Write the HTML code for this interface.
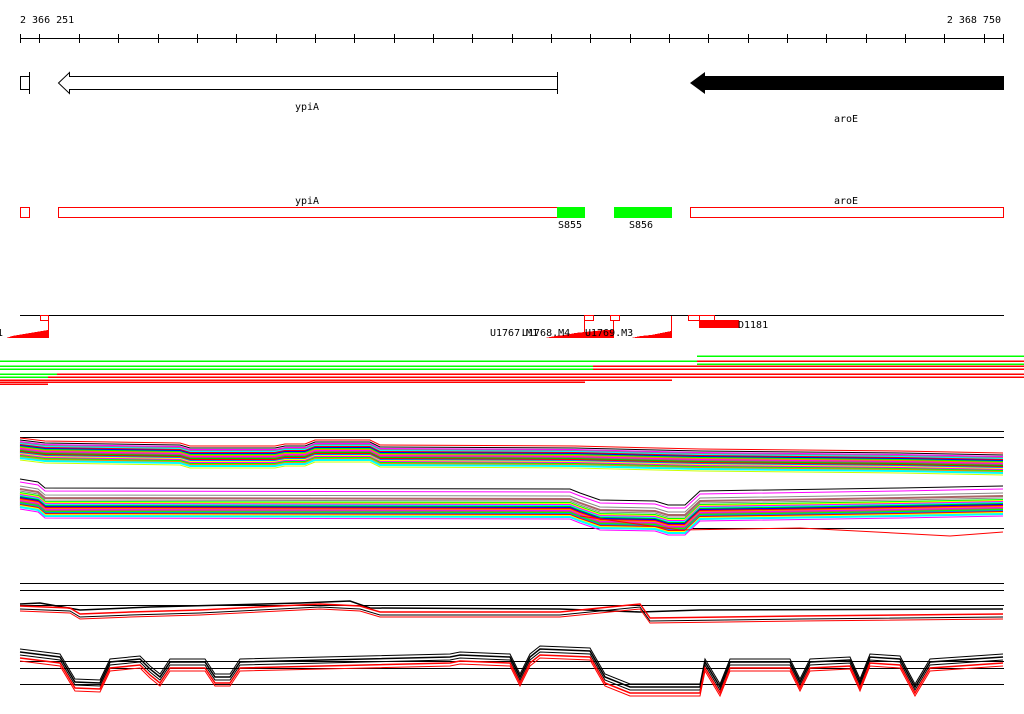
<!DOCTYPE html>
<html><head><meta charset="utf-8"><style>
body{margin:0;background:#fff;width:1024px;height:714px;overflow:hidden}
svg{display:block}
text{font-family:"DejaVu Sans Mono","Liberation Mono",monospace;font-size:10px;fill:#000}
</style></head><body>
<svg width="1024" height="714" viewBox="0 0 1024 714" xmlns="http://www.w3.org/2000/svg" shape-rendering="crispEdges">
<text x="20" y="23">2 366 251</text>
<text x="1001" y="23" text-anchor="end">2 368 750</text>
<g stroke="#000" stroke-width="1">
<line x1="20" y1="38.5" x2="1004" y2="38.5"/>
<path d="M20.5 34v9M39.5 34v9M79.5 34v9M118.5 34v9M158.5 34v9M197.5 34v9M236.5 34v9M276.5 34v9M315.5 34v9M354.5 34v9M394.5 34v9M433.5 34v9M472.5 34v9M512.5 34v9M551.5 34v9M590.5 34v9M630.5 34v9M669.5 34v9M708.5 34v9M748.5 34v9M787.5 34v9M826.5 34v9M866.5 34v9M905.5 34v9M944.5 34v9M984.5 34v9M1003.5 34v9"/>
</g>
<path d="M20.5 76.5H29.5V89.5H20.5Z M29.5 72V94" fill="none" stroke="#000"/>
<path d="M58.5 83 L69.5 72.5 V76.5 H557.5 V89.5 H69.5 V93.5 Z M557.5 72v22" fill="#fff" stroke="#000" shape-rendering="auto"/>
<path d="M690 83 L705 72 V76 H1004 V90 H705 V94 Z" fill="#000" shape-rendering="auto"/>
<text x="307" y="110" text-anchor="middle">ypiA</text>
<text x="846" y="122" text-anchor="middle">aroE</text>
<g fill="none" stroke="#f00">
<rect x="20.5" y="207.5" width="9" height="10"/>
<rect x="58.5" y="207.5" width="499" height="10"/>
<rect x="690.5" y="207.5" width="313" height="10"/>
</g>
<rect x="557" y="207" width="28" height="11" fill="#0f0"/>
<rect x="614" y="207" width="58" height="11" fill="#0f0"/>
<text x="307" y="204" text-anchor="middle">ypiA</text>
<text x="846" y="204" text-anchor="middle">aroE</text>
<text x="558" y="228">S855</text>
<text x="629" y="228">S856</text>
<line x1="20" y1="315.5" x2="1004" y2="315.5" stroke="#000"/>
<g fill="none" stroke="#f00">
<rect x="40.5" y="315.5" width="8" height="5"/>
<rect x="584.5" y="315.5" width="9" height="5"/>
<rect x="610.5" y="315.5" width="9" height="5"/>
<rect x="688.5" y="315.5" width="11" height="5"/>
<rect x="699.5" y="315.5" width="15" height="5"/>
<path d="M48.5 316V338M584.5 320V338M613.5 320V338M671.5 316V338"/>
</g>
<g fill="#f00">
<path d="M6 338 L12 336 L18 335 L24 334 L30 333 L36 332 L42 331 L48 330 V338Z"/>
<path d="M545 338 L555 336 L565 335 L575 333 L585 332 L595 331 L605 330 L613 330 V338Z"/>
<path d="M631 338 L641 336 L651 335 L661 333 L671 331 V338Z"/>
<rect x="699" y="320" width="40" height="8"/>
</g>
<text x="-3" y="336">1</text>
<text x="490" y="336">U1767.M1</text>
<text x="522" y="336">U1768.M4</text>
<text x="585" y="336">U1769.M3</text>
<text x="738" y="328">D1181</text>
<g stroke-width="1.5">
<line x1="697" y1="356" x2="1024" y2="356" stroke="#0f0"/>
<line x1="0" y1="361" x2="697" y2="361" stroke="#0f0"/>
<line x1="697" y1="361" x2="1024" y2="361" stroke="#f00"/>
<line x1="697" y1="364" x2="1024" y2="364" stroke="#0f0"/>
<line x1="0" y1="366" x2="593" y2="366" stroke="#0f0"/>
<line x1="593" y1="366" x2="1024" y2="366" stroke="#f00"/>
<line x1="0" y1="369" x2="593" y2="369" stroke="#0f0"/>
<line x1="593" y1="369" x2="1024" y2="369" stroke="#f00"/>
<line x1="0" y1="374" x2="57" y2="374" stroke="#0f0"/>
<line x1="57" y1="374" x2="1024" y2="374" stroke="#f00"/>
<line x1="0" y1="377" x2="48" y2="377" stroke="#0f0"/>
<line x1="48" y1="377" x2="1024" y2="377" stroke="#f00"/>
<line x1="0" y1="380" x2="672" y2="380" stroke="#f00"/>
<line x1="0" y1="382" x2="585" y2="382" stroke="#f00"/>
<line x1="0" y1="384" x2="48" y2="384" stroke="#f00"/>
</g>
<defs>
<path id="b1" fill="none" d="M20 440 L45 443 L180 445 L190 448 L275 448 L285 446 L305 446 L315 442 L370 442 L380 447 L575 448 L700 451 L900 453 L1003 455"/>
<path id="b2" fill="none" d="M20 483 L38 486 L45 492 L570 493 L580 497 L600 504 L655 505 L668 509 L685 509 L700 495 L900 492 L1003 490"/>
<path id="c1" fill="none" d="M20 606 L70 608 L80 614 L130 612 L200 610 L320 604 L360 606 L380 612 L560 612 L640 604 L650 618 L800 616 L1003 614"/>
<path id="c2" fill="none" d="M20 655 L60 660 L75 685 L100 686 L110 665 L140 662 L150 672 L160 680 L170 665 L205 665 L215 680 L230 680 L240 665 L450 660 L460 658 L510 660 L520 680 L530 660 L540 652 L590 654 L605 680 L630 690 L700 690 L705 665 L720 690 L730 665 L790 665 L800 685 L810 665 L850 663 L860 685 L870 660 L900 662 L915 690 L930 665 L1003 660"/>
</defs>
<g stroke="#000" stroke-width="1">
<line x1="20" y1="431.5" x2="1004" y2="431.5"/>
<line x1="20" y1="437.5" x2="1004" y2="437.5"/>
<line x1="20" y1="528.5" x2="1004" y2="528.5"/>
<line x1="20" y1="583.5" x2="1004" y2="583.5"/>
<line x1="20" y1="590.5" x2="1004" y2="590.5"/>
<line x1="20" y1="605.5" x2="1004" y2="605.5"/>
<line x1="20" y1="661.5" x2="1004" y2="661.5"/>
<line x1="20" y1="668.5" x2="1004" y2="668.5"/>
<line x1="20" y1="684.5" x2="1004" y2="684.5"/>
</g>
<g stroke-width="2" shape-rendering="auto">
<use href="#b1" y="-2" stroke="#f00" stroke-width="1"/>
<use href="#b1" y="0" stroke="#000" stroke-width="1"/>
<use href="#b1" y="2" stroke="#f0f"/>
<use href="#b1" y="3" stroke="#888"/>
<use href="#b1" y="4" stroke="#0ff"/>
<use href="#b1" y="5" stroke="#f00"/>
<use href="#b1" y="6" stroke="#00f"/>
<use href="#b1" y="7" stroke="#0f0"/>
<use href="#b1" y="8" stroke="#f80"/>
<use href="#b1" y="9" stroke="#f0f"/>
<use href="#b1" y="10" stroke="#a66"/>
<use href="#b1" y="11" stroke="#0c0"/>
<use href="#b1" y="12" stroke="#f00"/>
<use href="#b1" y="13" stroke="#08f"/>
<use href="#b1" y="14" stroke="#ff0"/>
<use href="#b1" y="15" stroke="#f0f"/>
<use href="#b1" y="16" stroke="#0f0"/>
<use href="#b1" y="17" stroke="#f80"/>
<use href="#b1" y="18" stroke="#0ff"/>
<use href="#b1" y="20" stroke="#cf0" stroke-width="1"/>
<use href="#b2" y="-4" stroke="#000" stroke-width="1"/>
<use href="#b2" y="-1" stroke="#f0f" stroke-width="1"/>
<use href="#b2" y="3" stroke="#888" stroke-width="1"/>
<use href="#b2" y="6" stroke="#a66"/>
<use href="#b2" y="8" stroke="#888" stroke-width="1"/>
<use href="#b2" y="10" stroke="#0f0"/>
<use href="#b2" y="11" stroke="#ff0"/>
<use href="#b2" y="12" stroke="#f0f"/>
<use href="#b2" y="13" stroke="#0ff"/>
<use href="#b2" y="14" stroke="#0c0"/>
<use href="#b2" y="15" stroke="#00f"/>
<use href="#b2" y="16" stroke="#f00"/>
<use href="#b2" y="17" stroke="#f80"/>
<use href="#b2" y="18" stroke="#f0f"/>
<use href="#b2" y="19" stroke="#a66"/>
<use href="#b2" y="20" stroke="#0f0"/>
<use href="#b2" y="21" stroke="#08f"/>
<use href="#b2" y="22" stroke="#f00"/>
<use href="#b2" y="23" stroke="#ff0"/>
<use href="#b2" y="24" stroke="#0ff"/>
<use href="#b2" y="26" stroke="#f0f" stroke-width="1"/>
<path d="M580 516 L680 530 L800 528 L950 536 L1003 532" fill="none" stroke="#f00" stroke-width="1"/>
<path d="M20 604 L40 603 L80 610 L150 607 L300 603 L350 601 L370 608 L560 609 L640 612 L700 610 L1003 609" fill="none" stroke="#000" stroke-width="1.5"/>
<use href="#c1" y="0" stroke="#f00" stroke-width="1.5"/>
<use href="#c1" y="3" stroke="#000" stroke-width="1"/>
<use href="#c1" y="5" stroke="#f00" stroke-width="1"/>
<use href="#c2" y="-3" stroke="#000" stroke-width="1.5"/>
<use href="#c2" y="0" stroke="#000" stroke-width="1"/>
<use href="#c2" y="3" stroke="#f00" stroke-width="1.5"/>
<use href="#c2" y="6" stroke="#f00" stroke-width="1"/>
<use href="#c2" y="-6" stroke="#000" stroke-width="1"/>
</g>
</svg>
</body></html>
